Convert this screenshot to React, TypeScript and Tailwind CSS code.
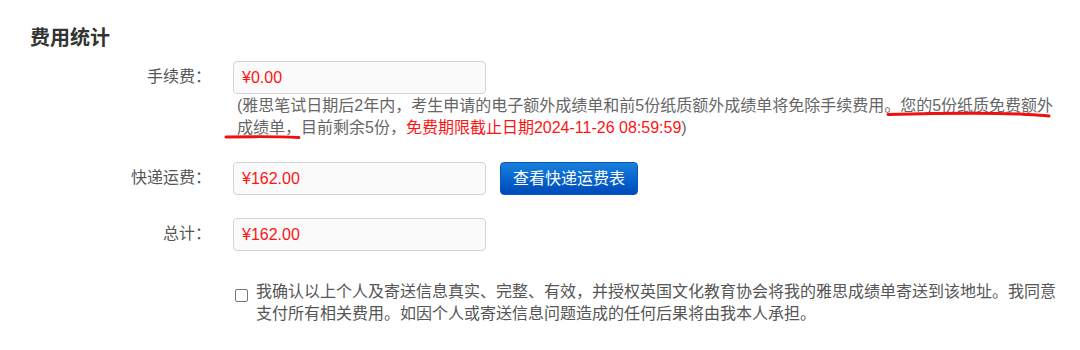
import React from "react";

const font = { fontFamily: '"Liberation Sans", "Noto Sans CJK SC", sans-serif' };

function FeeRow({ label, value, children }: { label: string; value: string; children?: React.ReactNode }) {
  return (
    <div className="flex items-start">
      <div className="w-[211px] text-right text-[16px] leading-[32px] text-[#555]">{label}</div>
      <div className="ml-[22px] flex items-center">
        <div className="w-[253px] h-[33px] border border-[#d4d4d4] rounded-[4px] bg-[#fafafa] pl-[8px] text-[16px] leading-[31px] text-[#ff1414]">
          {value}
        </div>
        {children}
      </div>
    </div>
  );
}

export default function App() {
  return (
    <div className="relative w-[1080px] h-[350px] bg-white" style={font}>
      <h3 className="pl-[30px] pt-[26px] text-[20px] leading-[24px] font-bold text-[#333]">费用统计</h3>

      <div className="mt-[11px]">
        <FeeRow label="手续费：" value="¥0.00" />
        {/* Note under the handling fee */}
        <div className="ml-[237px] mt-[1px] text-[16px] leading-[22px] text-[#666]">
          (雅思笔试日期后2年内，考生申请的电子额外成绩单和前5份纸质额外成绩单将免除手续费用。您的5份纸质免费额外
          <br />
          成绩单，目前剩余5份，
          <span className="text-[#ff1414]">免费期限截止日期2024-11-26 08:59:59</span>)
        </div>
      </div>

      <div className="mt-[23px]">
        <FeeRow label="快递运费：" value="¥162.00">
          <button className="ml-[14px] h-[33px] px-[12px] rounded-[4px] border border-[#0a57b8] bg-gradient-to-b from-[#1a80dc] to-[#0049bb] text-white text-[16px] leading-[31px]">
            查看快递运费表
          </button>
        </FeeRow>
      </div>

      <div className="mt-[23px]">
        <FeeRow label="总计：" value="¥162.00" />
      </div>

      {/* Confirmation */}
      <div className="mt-[30px] ml-[235px] flex items-start">
        <span className="mt-[8px] w-[13px] h-[13px] shrink-0 border border-[#777] rounded-[2px] bg-white" />
        <p className="ml-[8px] text-[16px] leading-[22px] text-[#555]">
          我确认以上个人及寄送信息真实、完整、有效，并授权英国文化教育协会将我的雅思成绩单寄送到该地址。我同意
          <br />
          支付所有相关费用。如因个人或寄送信息问题造成的任何后果将由我本人承担。
        </p>
      </div>

      {/* Hand-drawn red marks */}
      <svg className="absolute inset-0 pointer-events-none" width="1080" height="350">
        <path d="M888 114.5 C 930 113.5, 990 113, 1020 114 C 1035 115, 1045 115.5, 1049 116" stroke="#f01010" strokeWidth="3" fill="none" strokeLinecap="round" />
        <path d="M226 137 C 250 136.5, 280 136.5, 299 137.5" stroke="#f01010" strokeWidth="3" fill="none" strokeLinecap="round" />
      </svg>
    </div>
  );
}
